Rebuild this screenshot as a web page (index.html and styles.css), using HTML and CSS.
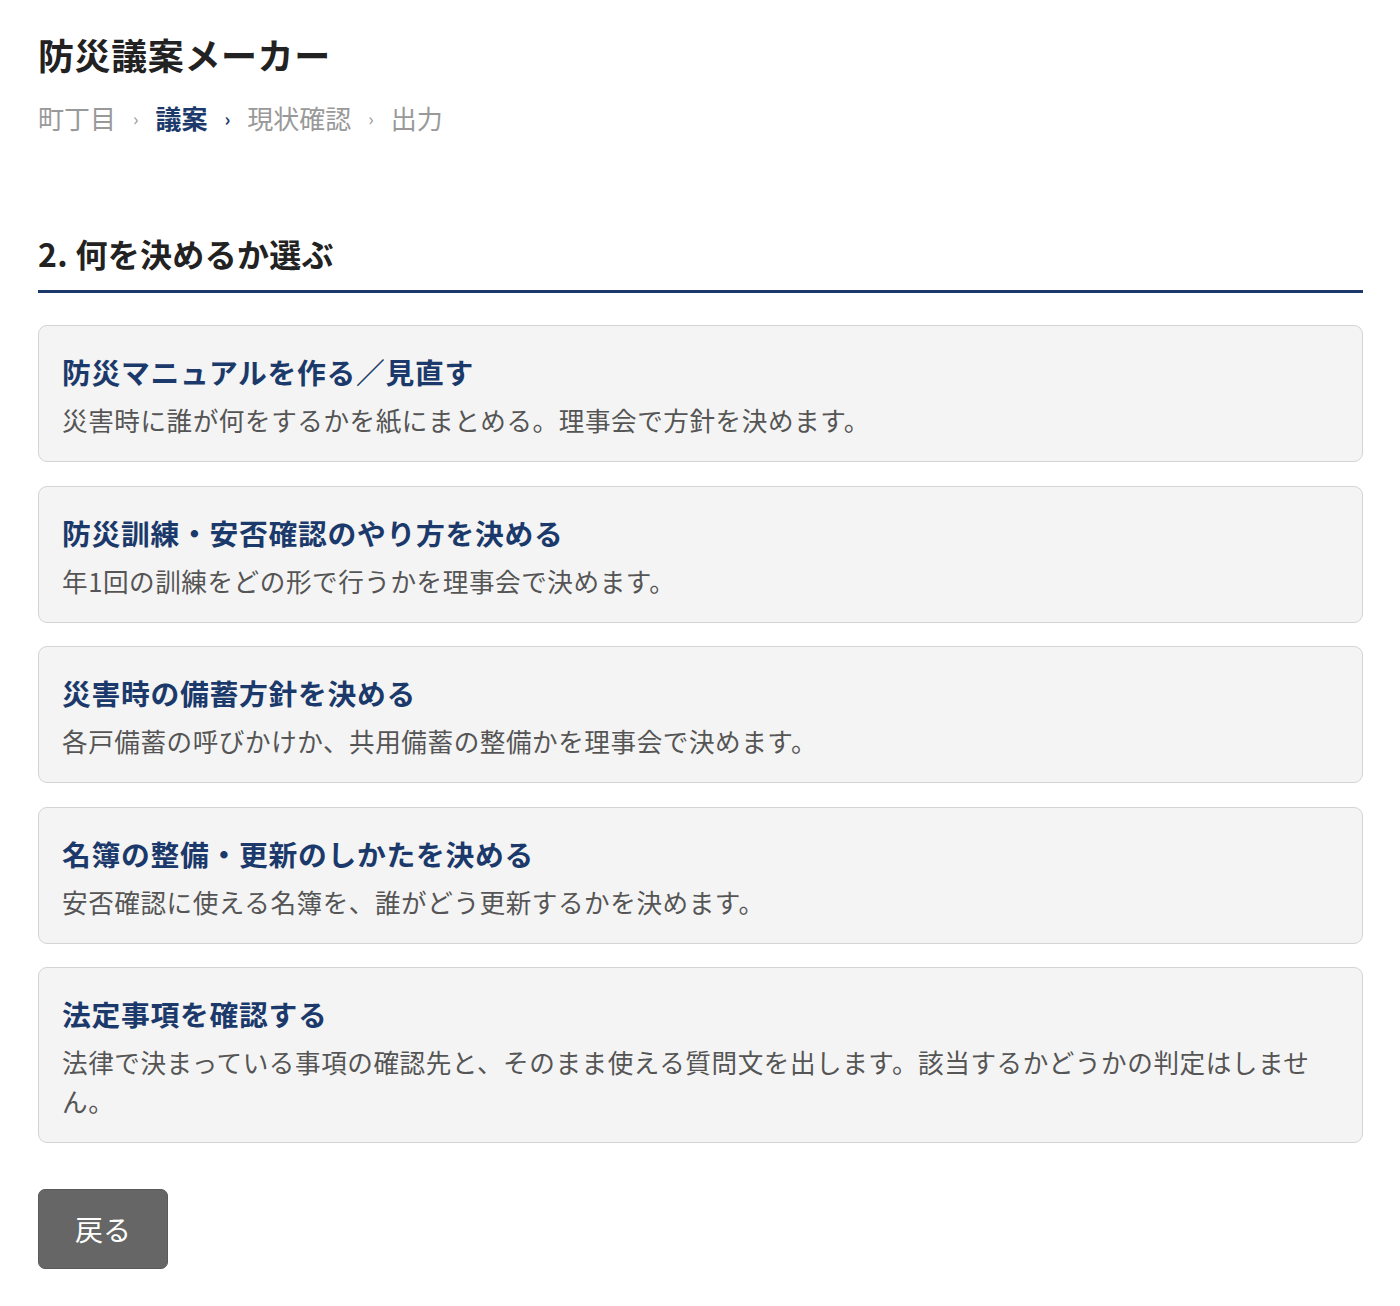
FILE: index.html
```html
<!DOCTYPE html>
<html lang="ja">
  <head>
    <meta charset="UTF-8" />
    <meta name="viewport" content="width=device-width, initial-scale=1.0" />
    <title>防災議案メーカー</title>
    <link rel="stylesheet" href="styles.css">
  </head>
  <body>
    <!-- Header: app title and step breadcrumb -->
    <header class="app-header">
      <h1 class="app-title">防災議案メーカー</h1>
      <nav class="steps" aria-label="手順">
        <span class="step">町丁目</span>
        <span class="sep">›</span>
        <span class="step current">議案</span>
        <span class="sep current">›</span>
        <span class="step">現状確認</span>
        <span class="sep">›</span>
        <span class="step">出力</span>
      </nav>
    </header>

    <main class="page">
      <section class="section">
        <h2 class="section-title">2. 何を決めるか選ぶ</h2>

        <!-- Topic choices -->
        <div class="choices">
          <button class="choice" type="button">
            <span class="choice-title">防災マニュアルを作る／見直す</span>
            <span class="choice-desc">災害時に誰が何をするかを紙にまとめる。理事会で方針を決めます。</span>
          </button>
          <button class="choice" type="button">
            <span class="choice-title">防災訓練・安否確認のやり方を決める</span>
            <span class="choice-desc">年1回の訓練をどの形で行うかを理事会で決めます。</span>
          </button>
          <button class="choice" type="button">
            <span class="choice-title">災害時の備蓄方針を決める</span>
            <span class="choice-desc">各戸備蓄の呼びかけか、共用備蓄の整備かを理事会で決めます。</span>
          </button>
          <button class="choice" type="button">
            <span class="choice-title">名簿の整備・更新のしかたを決める</span>
            <span class="choice-desc">安否確認に使える名簿を、誰がどう更新するかを決めます。</span>
          </button>
          <button class="choice" type="button">
            <span class="choice-title">法定事項を確認する</span>
            <span class="choice-desc">法律で決まっている事項の確認先と、そのまま使える質問文を出します。該当するかどうかの判定はしません。</span>
          </button>
        </div>

        <div class="actions">
          <button class="btn-back" type="button">戻る</button>
        </div>
      </section>
    </main>
  </body>
</html>
```

FILE: styles.css
```css
/* Theme colours */
:root {
  --navy: #1b3a6b;
  --text: #222;
  --muted: #999;
  --card-bg: #f4f4f4;
  --card-border: #d4d4d4;
}
* {
  box-sizing: border-box;
}
body {
  margin: 0;
  padding: 0 37px 0 38px;
  font-family: "Noto Sans CJK JP", "Noto Sans", sans-serif;
  color: var(--text);
  background: #fff;
}
/* Header */
.app-header {
  padding-top: 26px;
}
.app-title {
  margin: 0;
  font-size: 36px;
  line-height: 56px;
  font-weight: 700;
  letter-spacing: 0.6px;
  color: #222;
}
.steps {
  display: flex;
  align-items: center;
  gap: 17px;
  margin-top: 16px;
  font-size: 26px;
  line-height: 40px;
  color: var(--muted);
}
.steps .sep {
  font-size: 18px;
}
.steps .current {
  color: var(--navy);
  font-weight: 700;
}
/* Section */
.section {
  margin-top: 93px;
}
.section-title {
  margin: 0;
  padding-bottom: 15px;
  font-size: 32px;
  line-height: 44px;
  font-weight: 700;
  letter-spacing: 0.3px;
  color: #222;
  border-bottom: 3px solid var(--navy);
}
.choices {
  display: flex;
  flex-direction: column;
  gap: 23.5px;
  margin-top: 32px;
}
.choice {
  display: flex;
  flex-direction: column;
  gap: 6px;
  width: 100%;
  padding: 24px 23px 22px;
  text-align: left;
  font-family: inherit;
  background: var(--card-bg);
  border: 1.5px solid var(--card-border);
  border-radius: 9px;
  cursor: pointer;
}
.choice-title {
  font-size: 28.8px;
  line-height: 44px;
  font-weight: 700;
  letter-spacing: 0.7px;
  color: var(--navy);
}
.choice-desc {
  font-size: 25.6px;
  line-height: 39px;
  letter-spacing: 0.55px;
  color: #555;
}
/* Back button */
.actions {
  margin-top: 46px;
  padding-bottom: 36px;
}
.btn-back {
  width: 130px;
  height: 80px;
  font-family: inherit;
  font-size: 28px;
  color: #fff;
  background: #666;
  border: 1.5px solid #5a5a5a;
  border-radius: 7px;
  cursor: pointer;
}
```
